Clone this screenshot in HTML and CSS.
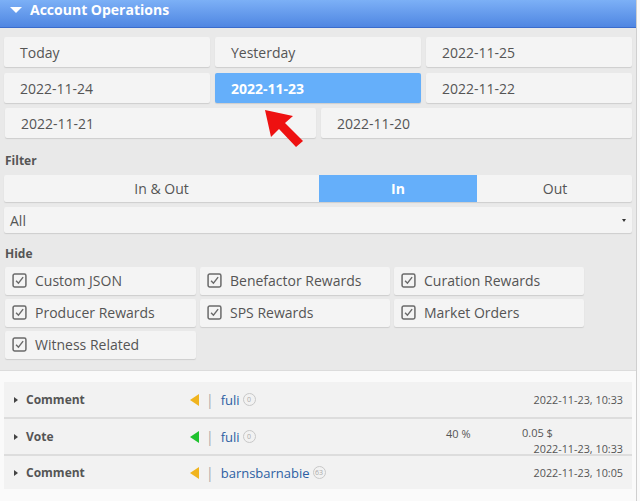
FILE: index.html
```html
<!DOCTYPE html>
<html>
<head>
<meta charset="utf-8">
<link rel="stylesheet" href="styles.css">
</head>
<body>
<div class="page">
  <div class="header">
    <svg class="hdr-caret" width="14" height="10" viewBox="0 0 14 10"><path d="M1 2 L13 2 L7 8 Z" fill="#fff"/></svg>
    <span>Account Operations</span>
  </div>
  <div class="panel">
    <div class="dates">
      <div class="btn">Today</div>
      <div class="btn">Yesterday</div>
      <div class="btn">2022-11-25</div>
      <div class="btn">2022-11-24</div>
      <div class="btn sel">2022-11-23</div>
      <div class="btn">2022-11-22</div>
    </div>
    <div class="dates2">
      <div class="btn">2022-11-21</div>
      <div class="btn">2022-11-20</div>
    </div>
    <div class="label">Filter</div>
    <div class="seg">
      <div class="seg-item wide">In &amp; Out</div>
      <div class="seg-item sel">In</div>
      <div class="seg-item">Out</div>
    </div>
    <div class="select"><span>All</span><span class="sel-arrow"></span></div>
    <div class="label hide-label">Hide</div>
    <div class="checks">
      <div class="chk"><svg class="box" viewBox="0 0 14 14"><rect x="1" y="1" width="12" height="12" rx="1.5" fill="none" stroke="#6a6a6a" stroke-width="1.4"/><path d="M3.8 7.2 L6 9.6 L10.4 3.8" fill="none" stroke="#6a6a6a" stroke-width="1.3"/></svg>Custom JSON</div>
      <div class="chk"><svg class="box" viewBox="0 0 14 14"><rect x="1" y="1" width="12" height="12" rx="1.5" fill="none" stroke="#6a6a6a" stroke-width="1.4"/><path d="M3.8 7.2 L6 9.6 L10.4 3.8" fill="none" stroke="#6a6a6a" stroke-width="1.3"/></svg>Benefactor Rewards</div>
      <div class="chk"><svg class="box" viewBox="0 0 14 14"><rect x="1" y="1" width="12" height="12" rx="1.5" fill="none" stroke="#6a6a6a" stroke-width="1.4"/><path d="M3.8 7.2 L6 9.6 L10.4 3.8" fill="none" stroke="#6a6a6a" stroke-width="1.3"/></svg>Curation Rewards</div>
      <div class="chk"><svg class="box" viewBox="0 0 14 14"><rect x="1" y="1" width="12" height="12" rx="1.5" fill="none" stroke="#6a6a6a" stroke-width="1.4"/><path d="M3.8 7.2 L6 9.6 L10.4 3.8" fill="none" stroke="#6a6a6a" stroke-width="1.3"/></svg>Producer Rewards</div>
      <div class="chk"><svg class="box" viewBox="0 0 14 14"><rect x="1" y="1" width="12" height="12" rx="1.5" fill="none" stroke="#6a6a6a" stroke-width="1.4"/><path d="M3.8 7.2 L6 9.6 L10.4 3.8" fill="none" stroke="#6a6a6a" stroke-width="1.3"/></svg>SPS Rewards</div>
      <div class="chk"><svg class="box" viewBox="0 0 14 14"><rect x="1" y="1" width="12" height="12" rx="1.5" fill="none" stroke="#6a6a6a" stroke-width="1.4"/><path d="M3.8 7.2 L6 9.6 L10.4 3.8" fill="none" stroke="#6a6a6a" stroke-width="1.3"/></svg>Market Orders</div>
      <div class="chk"><svg class="box" viewBox="0 0 14 14"><rect x="1" y="1" width="12" height="12" rx="1.5" fill="none" stroke="#6a6a6a" stroke-width="1.4"/><path d="M3.8 7.2 L6 9.6 L10.4 3.8" fill="none" stroke="#6a6a6a" stroke-width="1.3"/></svg>Witness Related</div>
    </div>
    <svg class="red-arrow" width="44" height="42" viewBox="0 0 44 42">
      <path d="M1 1 L29 7 L21 14 L39 32 L32 38 L15 20 L7 28 Z" fill="#ee1111"/>
    </svg>
  </div>
  <div class="ops">
    <div class="op">
      <span class="op-caret"></span>
      <span class="op-name">Comment</span>
      <span class="tri yellow"></span>
      <span class="pipe">|</span>
      <span class="user">fuli</span>
      <span class="rep">0</span>
      <span class="spacer"></span>
      <span class="date">2022-11-23, 10:33</span>
    </div>
    <div class="op">
      <span class="op-caret"></span>
      <span class="op-name">Vote</span>
      <span class="tri green"></span>
      <span class="pipe">|</span>
      <span class="user">fuli</span>
      <span class="rep">0</span>
      <span class="spacer"></span>
      <span class="pct">40 %</span>
      <span class="val-col">
        <span class="val">0.05 $</span>
        <span class="date low">2022-11-23, 10:33</span>
      </span>
    </div>
    <div class="op">
      <span class="op-caret"></span>
      <span class="op-name">Comment</span>
      <span class="tri yellow"></span>
      <span class="pipe">|</span>
      <span class="user">barnsbarnabie</span>
      <span class="rep">63</span>
      <span class="spacer"></span>
      <span class="date">2022-11-23, 10:05</span>
    </div>
  </div>
</div>
</body>
</html>
```

FILE: styles.css
```css
* { box-sizing: border-box; }
html, body { margin: 0; padding: 0; }
body {
  font-family: "Open Sans", "Noto Sans", sans-serif;
  background: #fafafa;
  color: #555;
  width: 640px;
  height: 501px;
  overflow: hidden;
}
.page {
  width: 637px;
  border-right: 1px solid #cfcfcf;
  background: #fafafa;
  min-height: 501px;
}
.header {
  height: 28px;
  background: linear-gradient(#7cb0f6, #4f86e2);
  border-bottom: 1px solid #3a6ccc;
  display: flex;
  align-items: center;
  padding: 0 0 8px 9px;
  color: #fff;
  font-weight: 700;
  font-size: 14px;
  gap: 7px;
}
.hdr-caret { margin-top: 1px; }
.panel {
  position: relative;
  background: #e9e9e9;
  padding: 9px 4px 11px 4px;
  border-bottom: 1px solid #dcdcdc;
}
.dates {
  display: grid;
  grid-template-columns: 1fr 1fr 1fr;
  column-gap: 5px;
  row-gap: 6px;
}
.dates2 {
  display: grid;
  grid-template-columns: 1fr 1fr;
  column-gap: 5px;
  margin-top: 5px;
  padding-left: 1px;
}
.btn {
  height: 30px;
  background: #f4f4f4;
  border-radius: 2px;
  box-shadow: 0 1px 1px rgba(0,0,0,0.12);
  display: flex;
  align-items: center;
  padding-left: 16px;
  font-size: 14px;
  color: #555;
}
.btn.sel {
  background: #65affa;
  color: #fff;
  font-weight: 700;
}
.label {
  font-size: 12px;
  font-weight: 700;
  color: #555;
  margin-top: 13px;
  height: 20px;
  line-height: 20px;
  padding-left: 1px;
}
.seg {
  display: flex;
  height: 27px;
  margin-top: 4px;
  background: #f4f4f4;
  border-radius: 2px;
  box-shadow: 0 1px 1px rgba(0,0,0,0.12);
  font-size: 14px;
}
.seg-item {
  flex: 0 0 156px;
  display: flex;
  align-items: center;
  justify-content: center;
  color: #555;
}
.seg-item.wide { flex: 0 0 315px; }
.seg-item.sel {
  flex: 0 0 158px;
  background: #65affa;
  color: #fff;
  font-weight: 700;
}
.select {
  margin-top: 5px;
  height: 26px;
  background: #f4f4f4;
  border-radius: 2px;
  box-shadow: 0 1px 1px rgba(0,0,0,0.12);
  display: flex;
  align-items: center;
  justify-content: space-between;
  padding: 0 6px 0 6px;
  font-size: 14px;
  color: #555;
}
.sel-arrow {
  width: 0; height: 0;
  border-left: 2px solid transparent;
  border-right: 2px solid transparent;
  border-top: 3px solid #333;
}
.hide-label { margin-top: 11px; }
.checks {
  display: grid;
  grid-template-columns: 191px 190px 190px;
  column-gap: 4px;
  row-gap: 4px;
  margin-top: 3px;
  padding-left: 1px;
}
.chk {
  height: 28px;
  background: #f4f4f4;
  border-radius: 2px;
  box-shadow: 0 1px 1px rgba(0,0,0,0.12);
  display: flex;
  align-items: center;
  padding: 0 0 1px 7px;
  gap: 8px;
  font-size: 14px;
  color: #555;
}
.box { width: 15px; height: 15px; flex: 0 0 15px; }
.red-arrow {
  position: absolute;
  left: 264px;
  top: 81px;
}
.ops {
  padding: 11px 4px 0 4px;
}
.op {
  height: 37px;
  background: #f2f2f2;
  border-bottom: 2px solid #dddddd;
  display: flex;
  align-items: center;
  font-size: 12px;
  color: #555;
  padding-right: 9px;
}
.op:first-child { height: 37px; }
.op:last-child { border-bottom: none; height: 33px; }
.op-caret {
  width: 0; height: 0;
  border-top: 3px solid transparent;
  border-bottom: 3px solid transparent;
  border-left: 4px solid #444;
  margin-left: 10px;
  margin-right: 8px;
}
.op-name {
  font-weight: 700;
  font-size: 12px;
  width: 164px;
}
.tri {
  width: 0; height: 0;
  border-top: 6px solid transparent;
  border-bottom: 6px solid transparent;
  border-right: 9px solid #f0b41e;
  margin-right: 7px;
}
.tri.green { border-right-color: #1fc22e; }
.pipe { color: #aaa; font-size: 14px; margin-right: 7px; }
.user { color: #2d5fa3; font-size: 13px; }
.rep {
  width: 13px; height: 13px;
  border: 1px solid #c8c8c8;
  border-radius: 50%;
  font-size: 7px;
  color: #aaa;
  display: flex;
  align-items: center;
  justify-content: center;
  margin-left: 3px;
}
.spacer { flex: 1; }
.date { font-size: 10.8px; color: #555; }
.pct { font-size: 11px; width: 76px; margin-top: -6px; }
.val-col {
  display: flex;
  flex-direction: column;
  width: 101px;
  padding-top: 8px;
}
.val { font-size: 11px; line-height: 14px; }
.date.low { line-height: 14px; text-align: right; margin-top: 2px; }
```
